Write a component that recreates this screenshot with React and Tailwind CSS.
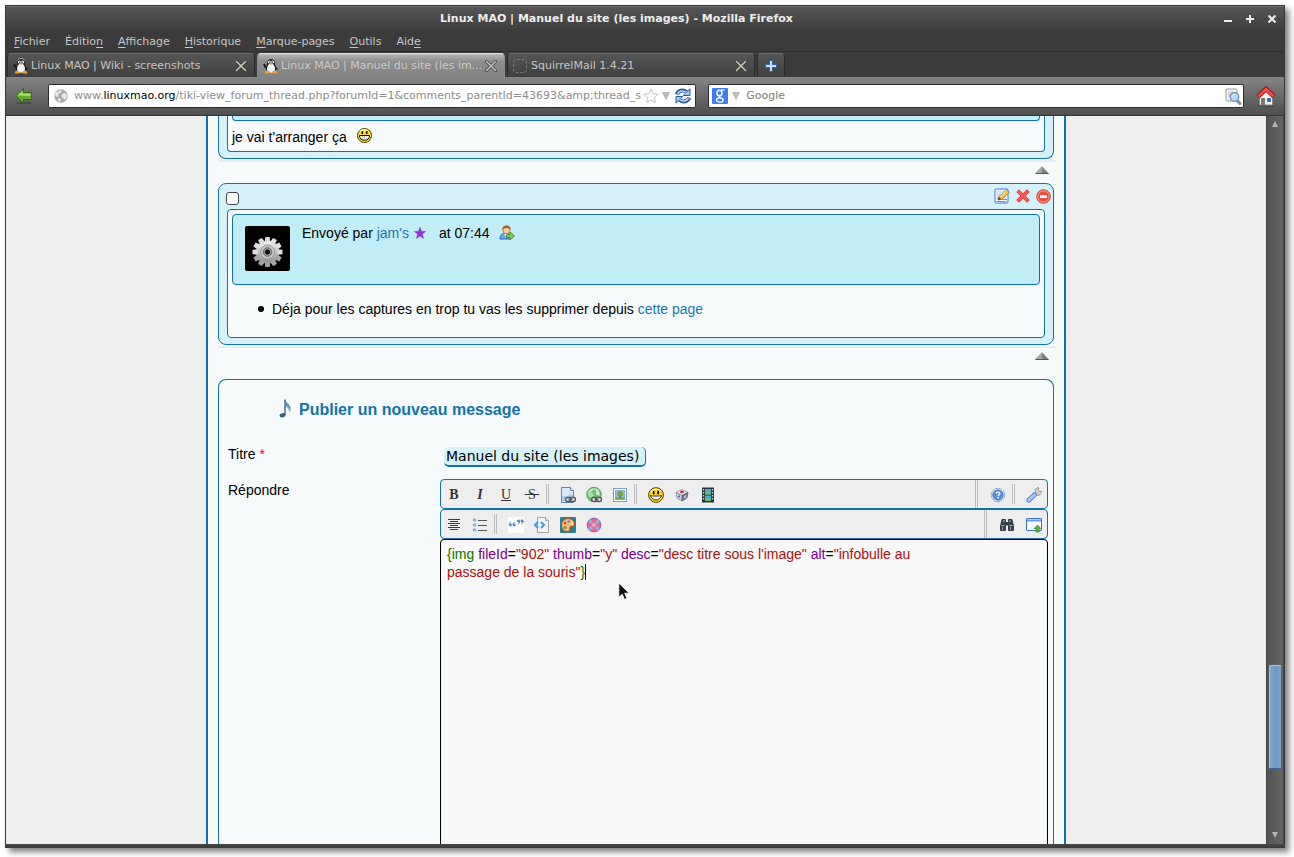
import React from "react";

const Svg = ({ w = 16, h = 16, vb, children, className = "" }) => (
  <svg width={w} height={h} viewBox={vb || `0 0 ${w} ${h}`} className={`block shrink-0 ${className}`} aria-hidden="true">
    {children}
  </svg>
);

const Penguin = () => (
  <Svg>
    <path d="M1 6l1.500 3L5 11" stroke="#1c1c1c" strokeWidth="2" fill="none" />
    <path d="M8 .5c-3 0-3.800 1.800-3.600 4.200C4 7 2.800 8.500 3 11.500L5 14h6l2-2.500c.2-3-1-4.500-1.400-6.800C11.800 2.300 11 .5 8 .5Z" fill="#181818" />
    <path d="M4.300 2.500C5.500 0 10.500 0 11.700 2.500" stroke="#b5b5b5" fill="none" />
    <path d="M8 5.500c-2.500 0-4 2.800-4 5.300s1.500 4 4 4 4-1.500 4-4-1.500-5.300-4-5.300Z" fill="#f2f2f2" />
    <circle cx="6.400" cy="4" r="1.500" fill="#fff" /><circle cx="9.600" cy="4" r="1.500" fill="#fff" />
    <circle cx="6.700" cy="4.200" r=".6" /><circle cx="9.300" cy="4.200" r=".6" />
    <path d="M6.200 5.300h3.600L8 7Z" fill="#e8a010" />
    <path d="M2.500 13h4v2.500H1.500ZM9.500 13h4l1 2.500h-5Z" fill="#f7a01c" />
    <path d="m12 8 3 3-2 1" fill="#181818" />
  </Svg>
);

const TabClose = () => (
  <Svg w={12} h={12}>
    <path d="m1.500 1.500 9 9m0-9-9 9" stroke="#333" strokeWidth="3" strokeLinecap="round" />
    <path d="m1.500 1.500 9 9m0-9-9 9" stroke="#c9c7bc" strokeWidth="1.700" strokeLinecap="round" />
  </Svg>
);

const Plus = () => (
  <Svg w={12} h={12}>
    <path d="M4.500.5h3v4h4v3h-4v4h-3v-4h-4v-3h4Z" fill="#c5ddf5" stroke="#2b62a8" />
  </Svg>
);

const BackArrow = () => (
  <Svg w={18} h={18}>
    <ellipse cx="9" cy="16" rx="8" ry="1.500" fill="#333" opacity=".4" />
    <path d="M.8 8.500 8.500 1.500v4h8v7h-8v4Z" fill="#67b02c" stroke="#2f6b0c" />
    <path d="M2.500 8.500 7.500 4v2.500h8v2.500Z" fill="#a5dc70" />
  </Svg>
);

const Globe = () => (
  <Svg w={14} h={14}>
    <circle cx="7" cy="7" r="6.700" fill="#a9a9a9" />
    <path d="M2 3c2 0 3-1 4.500-2L8 2 6.500 4 4 5l1 2-2 1-2-2ZM8 5l3-1 2 2-.5 3-2 2L9 9 7.500 8ZM4 9l3 1-1 3-2-1Z" fill="#e9e9e9" />
  </Svg>
);

const Star = () => (
  <Svg>
    <path d="m8 1 2.100 4.700 5 .5-3.800 3.400 1.100 5L8 12l-4.400 2.600 1.100-5L.9 6.200l5-.5Z" fill="#fff" stroke="#c4c4c4" />
  </Svg>
);

const Down = ({ className }) => (
  <Svg w={8} h={8} className={className}><path d="M.5.5h7l-3.500 7Z" fill="#bdbdbd" stroke="#a5a5a5" strokeWidth=".6" /></Svg>
);

const Reload = () => (
  <Svg>
    <path d="M2 6.500C3 2.500 8 1.300 11.500 4" stroke="#2a5c9c" strokeWidth="4" fill="none" />
    <path d="M15 .8v6.700H8.300Z" fill="#aac8ea" stroke="#2a5c9c" />
    <path d="M14 9.500C13 13.500 8 14.700 4.500 12" stroke="#2a5c9c" strokeWidth="4" fill="none" />
    <path d="M1 15.200V8.500h6.700Z" fill="#aac8ea" stroke="#2a5c9c" />
    <path d="M2.500 6C4 3 8 2 11.500 4.500M13.500 10C12 13 8 14 4.500 11.500" stroke="#aac8ea" strokeWidth="1.800" fill="none" />
  </Svg>
);

const SearchDoc = () => (
  <Svg w={17} h={17}>
    <rect x="1" y="1" width="11" height="12" rx="1" fill="#f4f4f2" stroke="#999" />
    <path d="M3 4h6M3 6h4M3 8h3" stroke="#bbb" />
    <path d="m12 12.500 3 3" stroke="#8a8a8a" strokeWidth="3" strokeLinecap="round" />
    <circle cx="9.500" cy="9" r="4.300" fill="#b7d3f2" stroke="#6a8fc0" strokeWidth="1.300" />
    <path d="M7 8.500c.5-1.500 2-2 3-1.800" stroke="#fff" fill="none" />
  </Svg>
);

const Home = () => (
  <Svg w={20} h={21}>
    <ellipse cx="10" cy="19.500" rx="8" ry="1.300" fill="#222" opacity=".4" />
    <path d="M3.500 10 10 4l6.500 6v9h-13Z" fill="#f2f2ee" stroke="#888" />
    <rect x="5" y="12" width="4" height="7" fill="#777" /><rect x="11" y="12" width="4" height="4" fill="#4d82c4" />
    <path d="M13 12v4M11 14h4" stroke="#244f90" strokeWidth=".6" />
    <path d="M2 10.500 10 3l8 7.500" stroke="#8e1212" strokeWidth="4.600" fill="none" />
    <path d="M2.300 10.300 10 3.200l7.700 7.100" stroke="#f04a4a" strokeWidth="2.800" fill="none" />
  </Svg>
);

const Grin = () => (
  <Svg w={15} h={15}>
    <circle cx="7.500" cy="7.500" r="7" fill="#ffe11c" stroke="#4a3a00" />
    <path d="M3 3.500C5 1.500 8 1.500 10 2.500" stroke="#fff9b0" strokeWidth="1.500" fill="none" />
    <path d="M5.300 3.300v2.700M9.700 3.300v2.700" stroke="#000" strokeWidth="1.600" />
    <path d="M2.500 7.500h10c0 3-2 4.700-5 4.700s-5-1.700-5-4.700Z" fill="#fff" stroke="#000" />
    <path d="M5.500 8v3.500M7.500 8v4M9.500 8v3.500" stroke="#888" strokeWidth=".4" />
  </Svg>
);

const UpTri = () => (
  <Svg w={14} h={8}>
    <path d="M7 .5 13.500 7.500H.5Z" fill="#aaa" stroke="#888" strokeWidth=".6" />
    <path d="M7 1v6.500h6.500" fill="#808080" />
    <path d="M.5 7.500h13" stroke="#555" />
  </Svg>
);

const EditIcon = () => (
  <Svg>
    <rect x="1" y="1" width="13" height="14" rx="1" fill="#fff" stroke="#3b7bd0" />
    <rect x="2.500" y="2.500" width="10" height="9" fill="#cfe2f8" />
    <path d="M2.500 13.500h10M8 11.500h5" stroke="#5a9ae0" />
    <path d="m4 12 .8-3.200 7.500-7 3 2.500-7.700 7.100Z" fill="#f3c35a" stroke="#9a6b1c" strokeWidth=".8" />
    <path d="m4 12 .8-3.200 2.600 2.500Z" fill="#5b3a1a" /><path d="m5.500 9 7-6.500" stroke="#ffe9a8" />
  </Svg>
);

const Cross = () => (
  <Svg w={14} h={14}>
    <path d="m3 3 8 8m0-8-8 8" stroke="#d83030" strokeWidth="3.800" strokeLinecap="square" />
    <path d="m3 3 8 8m0-8-8 8" stroke="#fa5757" strokeWidth="2.600" strokeLinecap="square" />
  </Svg>
);

const Minus = () => (
  <Svg w={15} h={15}>
    <circle cx="7.500" cy="7.500" r="6.800" fill="#e8503f" stroke="#c4473a" />
    <circle cx="7.500" cy="7.500" r="5.700" fill="none" stroke="#f8a79c" /><rect x="4" y="6.300" width="7" height="2.600" fill="#fff" />
  </Svg>
);

const GearAvatar = () => (
  <svg width="45" height="45" viewBox="0 0 45 45" className="block shrink-0 rounded-xs" role="img" aria-label="jam's">
    <defs><linearGradient id="gear" x1="0" y1="0" x2="0" y2="1"><stop offset="0" stopColor="#f4f4f4" /><stop offset="1" stopColor="#8c8c8c" /></linearGradient></defs>
    <rect width="45" height="45" fill="#000" />
    <g fill="url(#gear)">
      <circle cx="22.500" cy="26" r="11.300" />
      {[0, 30, 60, 90, 120, 150, 180, 210, 240, 270, 300, 330].map((a) => (
        <path key={a} d="M20.300 11h4.400l.6 5h-5.600Z" transform={`rotate(${a} 22.5 26)`} fill={a > 90 && a < 270 ? "#a4a4a4" : "#dedede"} />
      ))}
    </g>
    <circle cx="22.500" cy="26" r="7" fill="#c9c9c9" stroke="#999" />
    <circle cx="22.500" cy="26" r="4.300" fill="#999" stroke="#666" />
    <circle cx="22.500" cy="26" r="2.500" fill="#111" />
  </svg>
);

const PurpleStar = () => (
  <Svg w={12} h={12}><path d="m6 .3 1.500 4.100h4.300L8.300 7l1.300 4.600L6 8.900l-3.600 2.700L3.700 7 .2 4.400h4.300Z" fill="#9432e0" stroke="#6a18b8" strokeWidth=".4" /></Svg>
);

const UserGo = () => (
  <Svg>
    <path d="M1 14c0-4 2-5.500 5.500-5.500S12 10 12 14Z" fill="#6fa5ea" stroke="#2b67b5" />
    <path d="M5 8.500h4L7 12Z" fill="#fff" />
    <circle cx="7.500" cy="5" r="3.700" fill="#f6cfa2" stroke="#9c6432" strokeWidth=".7" />
    <path d="M3.500 5C3 1.500 5.500.5 7.500.5s4.500 1 4 4.500C10.500 4 9 3 7.500 3S4 4 3.500 5Z" fill="#a2602a" />
    <path d="M7.500 9.500H11V7l4.500 4-4.500 4v-2.500H7.500Z" fill="#7fc45a" stroke="#3c8422" strokeWidth=".8" />
  </Svg>
);

const Note = () => (
  <Svg w={12} h={19}>
    <ellipse cx="3.500" cy="16.300" rx="3" ry="2.100" fill="#35627c" transform="rotate(-15 3.500 16.300)" />
    <path d="M6 16V.5" stroke="#2d5a74" strokeWidth="1.300" />
    <path d="M6 .5c0 3 5.500 4 5.500 8.500 0 2-.3 3-.6 5 0-4-2.900-6-4.900-7Z" fill="#4d7a94" />
    <path d="M6.500 4c2 1 4 2 4.600 4M6.500 6.500c2 1 4 2 4.600 4" stroke="#f6fafb" strokeWidth=".5" fill="none" />
  </Svg>
);

const letter = "block font-['Liberation_Serif',serif] text-[14px] leading-4 text-[#333]";
const Chain = () => (
  <g fill="none" stroke="#555" strokeWidth="1.400"><rect x="5.700" y="10.500" width="5.500" height="4" rx="2" fill="#eee" /><rect x="10" y="10.500" width="5.500" height="4" rx="2" fill="#eee" /><path d="M8.500 12.500h4" /></g>
);
const ic = {
  page: <Svg><path d="M1.500.5h9l3 3v12h-12Z" fill="#d7e8fb" stroke="#5b86bd" /><path d="M10.500.5v3h3" fill="#fff" stroke="#5b86bd" /><path d="M2 9c4 1 8-2 11-1v6H2Z" fill="#a9cbf2" /><Chain /></Svg>,
  globe: <Svg><circle cx="8" cy="7.500" r="7.200" fill="#6fc070" stroke="#4b9a5a" /><path d="M1.500 6C3 2.500 5 1.500 8 1.500L5.500 5 8 8l-3 3C2.500 10 1.500 8 1.500 6Z" fill="#a7dfb0" /><path d="m10 2 4 4-1 3-3-2Z" fill="#c9ecd0" /><path d="M3 4.500C5 1.500 10 1 13 4" stroke="#e2f7e4" fill="none" /><Chain /></Svg>,
  image: <Svg><rect x="1.500" y="1.500" width="13" height="13" fill="#fff" stroke="#7f9fc8" /><rect x="3.500" y="3.500" width="9" height="9" fill="#8fbdec" stroke="#6a8fc0" strokeWidth=".6" /><circle cx="8.200" cy="6.800" r="2.900" fill="#74a83c" /><path d="M3.500 10.500h9v2h-9Z" fill="#6ba545" /><path d="M8.200 9v2" stroke="#6b4a20" /></Svg>,
  smile: <Svg><circle cx="8" cy="8" r="7.400" fill="#fbd51c" stroke="#5a4300" /><path d="M3 5C4.500 2 10 1.500 12.500 4" stroke="#fff3a0" strokeWidth="1.500" fill="none" /><path d="M5.700 3.800v3.400M10.200 3.800v3.400" stroke="#000" strokeWidth="1.700" /><path d="M2.500 8.500c1 .8 10 .8 11 0-.6 2.800-3 4.300-5.500 4.300s-4.900-1.500-5.500-4.300Z" fill="#fff" stroke="#222" strokeWidth=".9" /></Svg>,
  cube: <Svg><path d="m8 2.500 6 3-6 3-6-3Z" fill="#f6f6fa" stroke="#778" strokeWidth=".7" /><path d="m2 5.500 6 3V14l-5-3Z" fill="#dcdce6" stroke="#778" strokeWidth=".7" /><path d="m14 5.500-6 3V14l5-3Z" fill="#77788c" stroke="#556" strokeWidth=".7" /><ellipse cx="8" cy="5" rx="2" ry="1.300" fill="#d42438" /><ellipse cx="5" cy="9.500" rx="1" ry="1.300" fill="#4668c4" /><path d="m10 9 2.500 2M12 8l-1.500 3" stroke="#c8f0ff" strokeWidth=".8" /></Svg>,
  film: <Svg><rect x="2" y=".5" width="12" height="15" fill="#263238" /><rect x="5" y="2" width="6" height="5.500" fill="#50a8d8" /><rect x="5" y="8.500" width="6" height="5.500" fill="#50a8d8" /><path d="m5 7.500 2-4 4 4Zm0 6.500 3-4.500 3 4.500Z" fill="#62c45c" /><path d="M3.500 2v12M12.500 2v12" stroke="#cfd8dc" strokeWidth="1.400" strokeDasharray="1.500 1.500" /></Svg>,
  help: <Svg><circle cx="8" cy="8" r="6.800" fill="#fff" stroke="#8fb0dc" /><circle cx="8" cy="8" r="5.300" fill="#5b8fd4" stroke="#3f74b8" strokeWidth=".7" /><path d="M6.300 6.700c0-2.200 3.600-2.100 3.500-.1 0 1.200-1.700 1.200-1.700 2.600" stroke="#fff" strokeWidth="1.300" fill="none" /><rect x="7.400" y="10" width="1.400" height="1.400" fill="#fff" /></Svg>,
  wrench: <Svg><path d="m9 5 .5-3L12 .5l1 .5-1 2.500 1.500 1.200L15.500 4l.2 1.500-1.700 2.200-3 .8Z" fill="#d6d6d6" stroke="#888" strokeWidth=".8" /><path d="m8.500 7.500 2.200-2" stroke="#bbb" strokeWidth="3" /><path d="m2.800 13.200 5.700-5.400" stroke="#4d78c8" strokeWidth="4.800" strokeLinecap="round" /><path d="m2.800 13.200 5.700-5.400" stroke="#a9c8f6" strokeWidth="3" strokeLinecap="round" /></Svg>,
  center: <Svg><path d="M2 2.500h12M4 4.500h8M2 6.500h12M4 8.500h8M2 10.500h12M4 12.500h8" stroke="#3a3a3a" strokeWidth="1" /></Svg>,
  list: <Svg><path d="M6 3.500h9M6 8.500h9M6 13.500h9" stroke="#555" /><g fill="#a6c6f2" stroke="#6d93c8" strokeWidth=".7"><circle cx="2.500" cy="3" r="1.300" /><circle cx="2.500" cy="8" r="1.300" /><circle cx="2.500" cy="13" r="1.300" /></g></Svg>,
  quote: <Svg><rect width="16" height="16" fill="#fff" /><g fill="#4d80c0"><circle cx="2.500" cy="8" r="1.400" /><circle cx="6.200" cy="8" r="1.400" /><circle cx="10.500" cy="4" r="1.400" /><circle cx="14" cy="4" r="1.400" /></g><path d="M1.300 8c0-2 .5-2.600 1.700-3M5 8c0-2 .5-2.600 1.700-3M11.700 4c0 2-.5 2.600-1.700 3M15.200 4c0 2-.5 2.600-1.700 3" stroke="#4d80c0" fill="none" /></Svg>,
  code: <Svg><path d="M3.500.5h8l3 3v12h-11Z" fill="#f4f4f4" stroke="#a5a5a5" /><path d="M11.500.5v3h3" fill="#ddd" stroke="#a5a5a5" /><path d="m4 5-3 3 3 3M7 5l3 3-3 3" stroke="#4a98e4" strokeWidth="2.100" fill="none" /></Svg>,
  palette: <Svg><rect width="16" height="16" rx="1" fill="#2f7f92" /><path d="M8 1.500c4 0 6.500 2.500 6.500 5.500 0 2.500-2 2.500-3.500 2.500s-1 1.500-1 2.500c0 2-1 2.500-3 2.500-3.500 0-5.500-3-5.500-6.500S4 1.500 8 1.500Z" fill="#f6b674" stroke="#a8501c" /><circle cx="5" cy="6" r="1.300" fill="#d4483c" /><circle cx="9" cy="4.500" r="1.300" fill="#4f9dd4" /><circle cx="12" cy="6.500" r="1.200" fill="#fff0a0" /><circle cx="5" cy="10.500" r="1.500" fill="#58a848" /></Svg>,
  ball: <Svg><circle cx="8" cy="8" r="6.900" fill="#f2608e" stroke="#8066a8" /><path d="m3.200 3.200 3 3M12.800 3.200l-3 3M3.200 12.800l3-3M12.800 12.800l-3-3" stroke="#86b8ea" strokeWidth="3" /><circle cx="8" cy="8" r="2.500" fill="#f6a9c4" stroke="#d0608c" strokeWidth=".8" /></Svg>,
  bino: <Svg><path d="M3 2.500h3.500v3h3v-3H13L14.500 9v4.500h-5V8h-3v5.500h-5V9Z" fill="#39434c" stroke="#1f262c" strokeWidth=".8" /><path d="M2.500 8.500h3M10.500 8.500h3M4 4h2M10 4h2" stroke="#a9b8c4" /><path d="M3.500 10v3M11.500 10v3" stroke="#8594a0" /></Svg>,
  win: <Svg><rect x=".5" y="1.500" width="15" height="12" rx=".5" fill="#f7fbff" stroke="#3f74c0" /><path d="M1 2.500h14v2H1Z" fill="#6d9de0" /><path d="m11.500 8 3.300 3.500h-1.700V15H9.900v-3.500H8.200Z" fill="#5fb040" stroke="#3a7f22" strokeWidth=".7" /></Svg>,
};

const Tool = ({ label, children }) => (
  <button type="button" aria-label={label} title={label} className="flex size-[26px] shrink-0 items-center justify-center">
    {children}
  </button>
);
const Sep = () => <span className="mt-[2px] mr-[6px] ml-px h-5 w-[3px] shrink-0 self-start border-x border-[#bcbcbc]" />;

const Tab = ({ icon, title, active }) => (
  <div
    className={`flex h-6 w-[248px] items-center gap-[2px] rounded-t border-x border-t pr-[7px] pl-[5px] ${
      active ? "border-[#8d8d8d] border-t-[#e0e0e0] bg-linear-to-b from-[#b8b8b8] via-[#8f8f8f] via-30% to-[#828282] text-[#c9c9c9]" : "border-[#2b2b2b] border-t-[#6b6b6b] bg-linear-to-b from-[#565656] to-[#3f3f3f] text-[#c6c6c6]"
    }`}
  >
    {icon}
    <button type="button" className="min-w-0 flex-1 text-left text-[11px] leading-4 whitespace-nowrap">{title}</button>
    <button type="button" aria-label="Fermer l'onglet"><TabClose /></button>
  </div>
);

const Menu = ({ before = "", k, after = "" }) => (
  <button type="button">{before}<span className="underline underline-offset-2">{k}</span>{after}</button>
);

const Rule = () => (
  <div className="mt-px -mr-[2px] flex flex-col items-end border-t-2 border-[#e4edf3] pr-[7px]">
    <a href="#top" aria-label="Haut de page" className="mt-1"><UpTri /></a>
  </div>
);

const Attr = ({ name, value }) => (
  <>
    <span className="text-[#770088]">{name}</span>
    <span className="text-black">=</span>
    <span className="text-[#aa1111]">{value}</span>
  </>
);

const box = "border-[#0f74a5]";

export default function App() {
  return (
    <div className="h-screen bg-white pt-[5px] pr-[9px] pb-[9px] pl-[5px] font-['Liberation_Sans',Arial,sans-serif] text-black">
      <div className="flex h-full flex-col border border-b-0 border-[#383838] bg-[#3b3b3b] shadow-[4px_4px_6px_rgba(0,0,0,0.5)]">
        <header className="font-['DejaVu_Sans',sans-serif]">
          <div className="flex h-[25px] items-center border-t border-[#717171] bg-linear-to-b from-[#555] to-[#3d3d3d] pr-px">
            <h1 className="flex-1 pl-[10px] text-center text-[11px] leading-4 font-bold text-[#eee]">Linux MAO | Manuel du site (les images) - Mozilla Firefox</h1>
            <div className="flex">
              <button type="button" aria-label="Réduire" className="flex h-5 w-[22px] items-center justify-center"><Svg w={10} h={10}><path d="M1 7h8" stroke="#eee" strokeWidth="2" /></Svg></button>
              <button type="button" aria-label="Agrandir" className="flex h-5 w-[22px] items-center justify-center"><Svg w={10} h={10}><path d="M1 5h8M5 1v8" stroke="#eee" strokeWidth="2" /></Svg></button>
              <button type="button" aria-label="Fermer" className="flex h-5 w-[22px] items-center justify-center"><Svg w={10} h={10}><path d="m1.500 1.500 7 7m0-7-7 7" stroke="#eee" strokeWidth="2" /></Svg></button>
            </div>
          </div>
          <nav className="flex h-[21px] items-center gap-[15px] border-b border-[#2f2f2f] pt-[2px] pl-2 text-[11px] leading-4 text-[#c8c8c8]">
            <Menu k="F" after="ichier" />
            <Menu before="Éditio" k="n" />
            <Menu k="A" after="ffichage" />
            <Menu k="H" after="istorique" />
            <Menu k="M" after="arque-pages" />
            <Menu k="O" after="utils" />
            <Menu before="Aid" k="e" />
          </nav>
          <div className="flex h-[25px] items-end gap-[2px] pl-px">
            <Tab icon={<Penguin />} title="Linux MAO | Wiki - screenshots" />
            <Tab icon={<Penguin />} title="Linux MAO | Manuel du site (les im..." active />
            <Tab icon={<span className="mr-[2px] size-[14px] shrink-0 rounded-sm border border-dashed border-[#777]" />} title="SquirrelMail 1.4.21" />
            <button type="button" aria-label="Nouvel onglet" className="flex h-6 w-7 items-center justify-center rounded-t border-x border-t border-[#2b2b2b] border-t-[#6b6b6b] bg-linear-to-b from-[#565656] to-[#3f3f3f]"><Plus /></button>
          </div>
          <div className="flex h-[39px] items-center gap-3 border-b border-[#363636] bg-linear-to-b from-[#858585] to-[#4f4f4f] pr-2 pl-[9px] text-[11px] leading-4">
            <button type="button" aria-label="Précédent" className="mr-[3px]"><BackArrow /></button>
            <div className="flex h-6 min-w-0 flex-[646] items-center rounded-xs border border-[#2e2e2e] bg-white pr-1 pl-[5px]">
              <Globe />
              <div className="relative ml-[6px] min-w-0 flex-1 overflow-hidden whitespace-nowrap text-[#8c8c8c]">
                www.<span className="text-black">linuxmao.org</span>/tiki-view_forum_thread.php?forumId=1&amp;comments_parentId=43693&amp;amp;thread_s
                <input type="text" aria-label="Adresse" className="absolute inset-0 w-full bg-transparent outline-none" />
              </div>
              <button type="button" aria-label="Marquer cette page"><Star /></button>
              <button type="button" aria-label="Historique des adresses" className="mr-[5px] ml-[3px]"><Down /></button>
              <button type="button" aria-label="Recharger"><Reload /></button>
            </div>
            <div className="flex h-6 min-w-0 flex-[537] items-center rounded-xs border border-[#2e2e2e] bg-white pr-px pl-[3px]">
              <button type="button" aria-label="Moteur de recherche" className="flex items-center gap-1">
                <Svg><rect width="16" height="16" rx="1" fill="#3f7cf6" /><g fill="none" stroke="#fff"><ellipse cx="7.500" cy="5" rx="2.500" ry="2.800" strokeWidth="1.500" /><path d="M9 2h3.500" strokeWidth="1.200" /><path d="M9.500 7.500C5 9 7 9.500 9 10.200" strokeWidth="1.200" /><ellipse cx="7.800" cy="12" rx="3.300" ry="2.200" strokeWidth="1.300" /></g></Svg>
                <Down />
              </button>
              <input type="text" aria-label="Recherche" placeholder="Google" className="ml-[6px] min-w-0 flex-1 outline-none placeholder:text-[#808080]" />
              <button type="button" aria-label="Lancer la recherche"><SearchDoc /></button>
            </div>
            <button type="button" aria-label="Accueil"><Home /></button>
          </div>
        </header>

        <div className="flex min-h-0 flex-1">
          <main className="min-w-0 flex-1 overflow-hidden bg-[#eee] text-[14px] leading-[18px]">
            <div className={`mx-auto w-full max-w-[860px] border-x-2 bg-[#f6fafb] px-[10px] ${box}`}>
              <article className={`rounded-b-lg border border-t-0 bg-[#d6f2f8] px-2 pb-[6px] ${box}`}>
                <div className={`rounded-b border border-t-0 bg-[#f6fafb] px-1 pb-1 ${box}`}>
                  <div className={`h-[5px] rounded-b border border-t-0 bg-[#c1edf6] ${box}`} />
                  <p className="mt-[6px] flex h-5 items-center gap-[10px]">je vai t'arranger ça <span className="pb-1"><Grin /></span></p>
                </div>
              </article>
              <Rule />

              <article className={`mt-[9px] rounded-lg border bg-[#d6f2f8] px-2 pb-[6px] ${box}`}>
                <div className="-mr-2 flex h-[25px] items-center justify-between pr-[2px]">
                  <input type="checkbox" aria-label="Sélectionner ce message" className="mt-[3px] -ml-px size-[13px] appearance-none rounded-[3px] border border-[#444] bg-white" />
                  <div className="flex items-center gap-[6px] pb-px">
                    <button type="button" aria-label="Modifier"><EditIcon /></button>
                    <button type="button" aria-label="Supprimer"><Cross /></button>
                    <button type="button" aria-label="Signaler"><Minus /></button>
                  </div>
                </div>
                <div className={`rounded border bg-[#f6fafb] p-1 ${box}`}>
                  <div className={`flex h-[71px] gap-3 rounded border bg-[#c1edf6] pt-[11px] pl-3 ${box}`}>
                    <GearAvatar />
                    <p className="-mt-[3px] flex h-5 items-center gap-[5px]">
                      <span>Envoyé par <a href="#jams" className="text-[#1b77ab]">jam's</a></span>
                      <PurpleStar />
                      <span className="ml-2">at 07:44</span>
                      <span className="ml-1"><UserGo /></span>
                    </p>
                  </div>
                  <ul className="mt-[15px] mb-[15px] pl-[26px]">
                    <li className="flex items-center">
                      <span className="mr-2 size-[6px] rounded-full bg-black" />
                      <p>Déja pour les captures en trop tu vas les supprimer depuis <a href="#page" className="text-[#1b77ab]">cette page</a></p>
                    </li>
                  </ul>
                </div>
              </article>
              <Rule />

              <form className={`mt-[19px] rounded-t-lg border border-b-0 px-[5px] pl-[9px] ${box}`} onSubmit={(e) => e.preventDefault()}>
                <h2 className="mt-5 flex h-5 items-center gap-2 pl-[51px] text-base font-bold text-[#1273a6]"><span className="pb-[3px]"><Note /></span>Publier un nouveau message</h2>
                <div className="mt-[23px] grid grid-cols-[212px_minmax(0,1fr)]">
                  <label htmlFor="titre" className="pt-[2px]">Titre <span className="text-[#f00]">*</span></label>
                  <div className="flex h-9 items-start pt-1 pl-1">
                    <input id="titre" type="text" defaultValue="Manuel du site (les images)" className={`h-5 w-[202px] rounded-[5px] border-r border-b-2 bg-[#d6f2f8] px-[2px] font-['DejaVu_Sans',sans-serif] text-[14px] leading-4 outline-none ${box}`} />
                  </div>
                  <label htmlFor="reponse" className="pt-[2px]">Répondre</label>
                  <div>
                    <div role="toolbar" aria-label="Mise en forme" className={`flex h-[30px] rounded border bg-[#eee] ${box}`}>
                      <div className="flex flex-1 items-center pt-[2px]">
                        <Tool label="Gras"><span className={`${letter} font-bold`}>B</span></Tool>
                        <Tool label="Italique"><span className={`${letter} font-bold italic`}>I</span></Tool>
                        <Tool label="Souligné"><span className={`${letter} underline`}>U</span></Tool>
                        <Tool label="Barré"><span className={`${letter} px-[2px] line-through`}>&nbsp;S&nbsp;</span></Tool>
                        <Sep />
                        <Tool label="Lien">{ic.page}</Tool>
                        <Tool label="Lien externe">{ic.globe}</Tool>
                        <Tool label="Image">{ic.image}</Tool>
                        <Sep />
                        <Tool label="Émoticônes">{ic.smile}</Tool>
                        <Tool label="Objet">{ic.cube}</Tool>
                        <Tool label="Vidéo">{ic.film}</Tool>
                      </div>
                      <span className="mr-[7px] w-[3px] border-x border-[#bcbcbc]" />
                      <div className="flex items-center pt-[2px]">
                        <Tool label="Aide">{ic.help}</Tool>
                        <Sep />
                        <Tool label="Outils">{ic.wrench}</Tool>
                      </div>
                    </div>
                    <div role="toolbar" aria-label="Paragraphe" className={`flex h-[30px] rounded border bg-[#eee] ${box}`}>
                      <div className="flex flex-1 items-center pt-[2px]">
                        <Tool label="Centrer">{ic.center}</Tool>
                        <Tool label="Liste">{ic.list}</Tool>
                        <Sep />
                        <Tool label="Citation">{ic.quote}</Tool>
                        <Tool label="Code">{ic.code}</Tool>
                        <Tool label="Couleur">{ic.palette}</Tool>
                        <Tool label="Secours">{ic.ball}</Tool>
                      </div>
                      <span className="mr-[7px] w-[3px] border-x border-[#bcbcbc]" />
                      <div className="flex items-center gap-px pt-[2px]">
                        <Tool label="Rechercher">{ic.bino}</Tool>
                        <Tool label="Plein écran">{ic.win}</Tool>
                      </div>
                    </div>
                    <div className="relative h-[480px] rounded border border-black bg-[#f8f8f8] px-[6px] pt-[5px]">
                      <div className="whitespace-pre">
                        <span className="text-[#117700]">{"{img "}</span>
                        <Attr name="fileId" value={'"902" '} />
                        <Attr name="thumb" value={'"y" '} />
                        <Attr name="desc" value={'"desc titre sous l\'image" '} />
                        <Attr name="alt" value={'"infobulle au'} />
                      </div>
                      <div className="whitespace-pre">
                        <span className="text-[#aa1111]">passage de la souris"</span>
                        <span className="border-r border-black text-[#117700]">{"}"}</span>
                      </div>
                      <textarea id="reponse" className="absolute inset-0 size-full resize-none bg-transparent px-[6px] pt-[5px] outline-none" />
                      <Svg w={12} h={19} className="pointer-events-none absolute top-[42px] left-[177px]">
                        <path d="M.8 1v14.500l3.400-3.300 2.300 5.300 2.500-1.100-2.300-5.200h4.600Z" fill="#111" stroke="#fff" strokeWidth=".9" />
                      </Svg>
                    </div>
                  </div>
                </div>
              </form>
            </div>
          </main>

          <div role="scrollbar" aria-controls="root" aria-valuenow={90} className="flex w-[18px] flex-col items-center border-x border-[#444] bg-linear-to-r from-[#535353] to-[#646464]">
            <button type="button" aria-label="Défiler vers le haut" className="flex h-4 items-center"><Svg w={8} h={8}><path d="M4 1 7 7H1Z" fill="#b5b5b5" /></Svg></button>
            <div className="flex-[536]" />
            <div className="h-[104px] w-[13px] shrink-0 rounded-xs border border-[#3f6796] border-t-[#9fc0e2] border-l-[#9fc0e2] bg-linear-to-r from-[#84a9d3] via-[#6b96c6] to-[#7aa2cf]" />
            <div className="flex-[57]" />
            <button type="button" aria-label="Défiler vers le bas" className="flex h-[18px] items-center"><Svg w={8} h={8}><path d="M4 7 7 1H1Z" fill="#b5b5b5" /></Svg></button>
          </div>
        </div>
        <footer className="-mx-px h-1 bg-linear-to-b from-[#4a4a4a] to-[#383838]" />
      </div>
    </div>
  );
}
